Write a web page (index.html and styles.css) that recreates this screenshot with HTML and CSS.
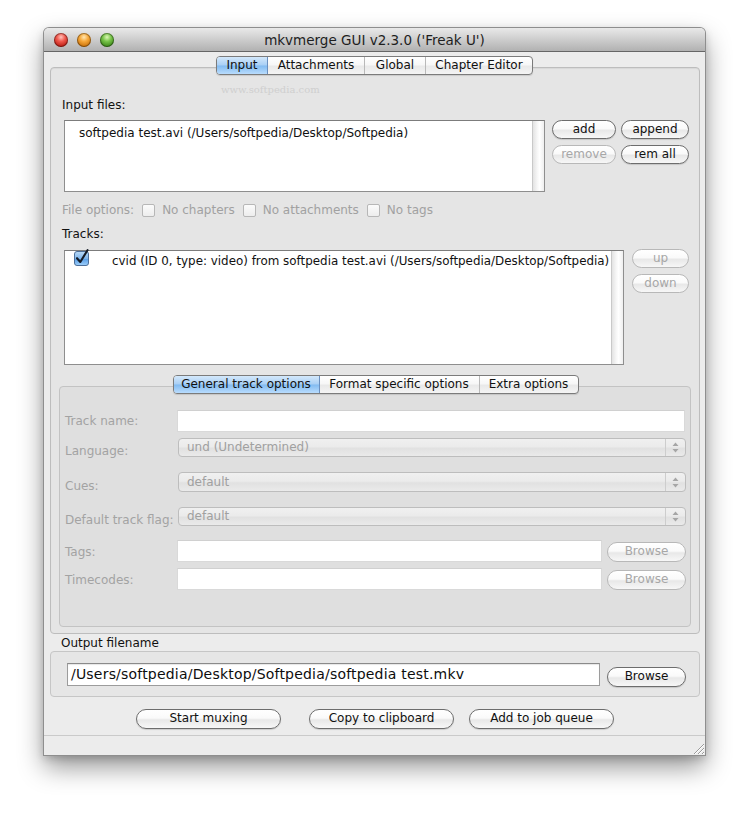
FILE: index.html
```html
<!DOCTYPE html>
<html>
<head>
<meta charset="utf-8">
<title>mkvmerge GUI</title>
<link rel="stylesheet" href="styles.css">
</head>
<body>
<div class="window">
  <div class="titlebar">
    <div class="lights">
      <span class="light red"></span>
      <span class="light yellow"></span>
      <span class="light green"></span>
    </div>
    <div class="title">mkvmerge GUI v2.3.0 ('Freak U')</div>
    <div></div>
  </div>

  <div class="tabs main-tabs">
    <span class="tab on tw-input">Input</span>
    <span class="tab tw-att">Attachments</span>
    <span class="tab tw-glob">Global</span>
    <span class="tab tw-chap">Chapter Editor</span>
  </div>

  <div class="panel main-panel">
    <div class="label lbl-input">Input files:</div>
    <div class="files-row">
      <div class="list files-list">
        <div class="list-item files-item">softpedia test.avi (/Users/softpedia/Desktop/Softpedia)</div>
        <div class="scrolltrack"></div>
      </div>
      <div class="btn-grid">
        <div class="btn bw-a">add</div>
        <div class="btn bw-b">append</div>
        <div class="btn bw-a disabled">remove</div>
        <div class="btn bw-b">rem all</div>
      </div>
    </div>

    <div class="fileopts">
      <span class="dim">File options:</span>
      <span class="cb"></span><span class="dim">No chapters</span>
      <span class="cb"></span><span class="dim">No attachments</span>
      <span class="cb"></span><span class="dim">No tags</span>
    </div>

    <div class="label lbl-tracks">Tracks:</div>
    <div class="tracks-row">
      <div class="list tracks-list">
        <div class="track-item">
          <svg class="checked" width="16" height="17" viewBox="0 0 16 17">
            <defs>
              <linearGradient id="cbg" x1="0" y1="0" x2="0" y2="1">
                <stop offset="0" stop-color="#bcdcf8"/>
                <stop offset="0.5" stop-color="#7fb6ec"/>
                <stop offset="0.55" stop-color="#5b9fe6"/>
                <stop offset="1" stop-color="#9fd0fb"/>
              </linearGradient>
            </defs>
            <rect x="0.5" y="2.5" width="14" height="14" rx="2.5" fill="url(#cbg)" stroke="#4d6f99"/>
            <path d="M3 9.2 L6.3 13 L13.5 1.2" fill="none" stroke="#161c26" stroke-width="2.1" stroke-linecap="round" stroke-linejoin="round"/>
          </svg>
          <span class="track-text">cvid (ID 0, type: video) from softpedia test.avi (/Users/softpedia/Desktop/Softpedia)</span>
        </div>
        <div class="scrolltrack"></div>
      </div>
      <div class="btn-col">
        <div class="btn bw-c disabled">up</div>
        <div class="btn bw-c disabled">down</div>
      </div>
    </div>

    <div class="tabs sub-tabs">
      <span class="tab on tw-gen">General track options</span>
      <span class="tab tw-fmt">Format specific options</span>
      <span class="tab tw-ext">Extra options</span>
    </div>
    <div class="panel sub-panel">
      <div class="frow r1">
        <div class="flabel l-center">Track name:</div>
        <div class="field f-name"></div>
      </div>
      <div class="frow r2">
        <div class="flabel l6">Language:</div>
        <div class="popup"><span class="ptext">und (Undetermined)</span><span class="parrows"><svg width="7" height="11" viewBox="0 0 7 11"><path d="M3.5 0.5 L6.5 4 L0.5 4 Z M3.5 10.5 L6.5 7 L0.5 7 Z" fill="#a6a6a6"/></svg></span></div>
      </div>
      <div class="frow r3">
        <div class="flabel l7">Cues:</div>
        <div class="popup"><span class="ptext">default</span><span class="parrows"><svg width="7" height="11" viewBox="0 0 7 11"><path d="M3.5 0.5 L6.5 4 L0.5 4 Z M3.5 10.5 L6.5 7 L0.5 7 Z" fill="#a6a6a6"/></svg></span></div>
      </div>
      <div class="frow r4">
        <div class="flabel l6">Default track flag:</div>
        <div class="popup"><span class="ptext">default</span><span class="parrows"><svg width="7" height="11" viewBox="0 0 7 11"><path d="M3.5 0.5 L6.5 4 L0.5 4 Z M3.5 10.5 L6.5 7 L0.5 7 Z" fill="#a6a6a6"/></svg></span></div>
      </div>
      <div class="frow r5">
        <div class="flabel l45">Tags:</div>
        <div class="field f-short"></div>
        <div class="btn bw-browse disabled b3">Browse</div>
      </div>
      <div class="frow r6">
        <div class="flabel l45">Timecodes:</div>
        <div class="field f-short"></div>
        <div class="btn bw-browse disabled b2">Browse</div>
      </div>
    </div>
  </div>

  <div class="label lbl-output">Output filename</div>
  <div class="outbox">
    <div class="outfield">/Users/softpedia/Desktop/Softpedia/softpedia test.mkv</div>
    <div class="btn bw-obrowse">Browse</div>
  </div>

  <div class="actions">
    <div class="btn bw-act">Start muxing</div>
    <div class="btn bw-act a2">Copy to clipboard</div>
    <div class="btn bw-act a3">Add to job queue</div>
  </div>

  <div class="statusbar">
    <svg class="grip" width="13" height="13" viewBox="0 0 13 13">
      <path d="M12 2 L2 12 M12 6 L6 12 M12 10 L10 12" stroke="#9a9a9a" stroke-width="1"/>
      <path d="M12 3 L3 12 M12 7 L7 12 M12 11 L11 12" stroke="#ffffff" stroke-width="1"/>
    </svg>
  </div>

  <div class="wm-small">www.softpedia.com</div>
</div>
</body>
</html>
```
FILE: styles.css
```css
* { box-sizing: border-box; }
html, body { margin: 0; padding: 0; }
body {
  width: 750px;
  height: 816px;
  overflow: hidden;
  background: #ffffff;
  font-family: "DejaVu Sans", "Liberation Sans", sans-serif;
  font-size: 12px;
  color: #111;
}

.window {
  position: relative;
  margin: 28px 0 0 44px;
  width: 661px;
  height: 727px;
  background: #ececec;
  border-radius: 5px 5px 0 0;
  box-shadow: 0 0 0 1px #8e8e8e, 0 12px 26px rgba(0,0,0,0.42), 0 3px 8px rgba(0,0,0,0.18);
  display: flex;
  flex-direction: column;
}

/* title bar */
.titlebar {
  height: 24px;
  flex: none;
  display: grid;
  grid-template-columns: 1fr auto 1fr;
  align-items: center;
  background: linear-gradient(#e9e9e9, #d0d0d0 45%, #b1b1b1 100%);
  border-bottom: 1px solid #666;
  border-radius: 5px 5px 0 0;
}
.lights { display: flex; gap: 9px; padding-left: 10px; }
.light {
  width: 14px; height: 14px; border-radius: 50%;
  box-shadow: inset 0 0 0 1px rgba(0,0,0,0.35);
}
.red { background: radial-gradient(circle at 50% 30%, #ffc3bc 0, #f05a4f 35%, #b8190f 80%, #d44034 100%); }
.yellow { background: radial-gradient(circle at 50% 30%, #ffe7b4 0, #f7a93b 35%, #c76e05 80%, #e39524 100%); }
.green { background: radial-gradient(circle at 50% 30%, #dcf7b4 0, #79c54b 35%, #3a8517 80%, #67b13b 100%); }
.title { font-size: 13.5px; color: #1e1e1e; text-align: center; padding-top: 1px; }

/* tabs */
.tabs {
  display: flex;
  align-self: center;
  height: 19px;
  flex: none;
  border: 1px solid #7b7b7b;
  border-radius: 4px;
  background: linear-gradient(#ffffff, #f7f7f7 45%, #e9e9e9 55%, #f4f4f4);
  position: relative;
  z-index: 1;
  box-shadow: 0 1px 1px rgba(0,0,0,0.12);
  overflow: hidden;
}
.tab {
  line-height: 17px;
  text-align: center;
  color: #111;
  border-left: 1px solid #b9b9b9;
}
.tab:first-child { border-left: none; }
.tab.on {
  background: linear-gradient(#d3e8fb, #a9cff5 48%, #82bbf1 52%, #b9dcfd);
  border-right: 1px solid #6a8fbf;
}
.tab.on + .tab { border-left: none; }
.main-tabs { margin-top: 4px; }
.tw-input { width: 51px; }
.tw-att { width: 96px; }
.tw-glob { width: 61px; }
.tw-chap { width: 107px; }

.panel {
  border: 1px solid #bdbdbd;
  border-radius: 4px;
}
.main-panel {
  flex: none;
  margin: -8px 5px 0 6px;
  background: #e5e5e5;
  padding: 30px 0 6px 0;
  display: flex;
  flex-direction: column;
  box-shadow: inset 0 1px 1px rgba(0,0,0,0.06);
}

.label { line-height: 15px; color: #111; flex: none; }
.lbl-input { margin-left: 11px; }
.files-row { display: flex; margin-top: 7px; margin-left: 13px; margin-right: 10px; align-items: flex-start; }
.list {
  position: relative;
  flex: none;
  background: #ffffff;
  border: 1px solid #8e8e8e;
  border-top-color: #7c7c7c;
}
.files-list { width: 481px; height: 72px; }
.files-item { padding: 4px 0 0 14px; line-height: 17px; }
.scrolltrack {
  position: absolute;
  top: 0; right: 0; bottom: 0;
  width: 12px;
  border-left: 1px solid #c9c9c9;
  background: linear-gradient(to right, #e3e3e3, #f7f7f7 40%, #ffffff 60%, #eeeeee);
}
.btn-grid {
  display: grid;
  grid-template-columns: 64px 68px;
  column-gap: 5px;
  row-gap: 6px;
  margin-left: auto;
}

.btn {
  height: 19px;
  border: 1px solid #6d6d6d;
  border-radius: 10px;
  background: linear-gradient(#ffffff, #fafafa 45%, #e8e8e8 55%, #f7f7f7);
  box-shadow: 0 1px 1px rgba(0,0,0,0.14);
  text-align: center;
  line-height: 17px;
  font-size: 12px;
  color: #111;
  white-space: nowrap;
  flex: none;
}
.btn.disabled { border-color: #b8b8b8; color: #a7a7a7; box-shadow: none; }

.fileopts {
  display: flex;
  align-items: center;
  height: 16px;
  margin-top: 10px;
  margin-left: 11px;
}
.dim { color: #a1a1a1; }
.cb {
  width: 13px; height: 13px;
  border: 1px solid #b7b7b7;
  border-radius: 2px;
  background: linear-gradient(#fbfbfb, #ededed);
  margin: 0 7px 0 8px;
}

.lbl-tracks { margin-top: 9px; margin-left: 11px; }
.tracks-row { display: flex; margin-top: 8px; margin-left: 13px; margin-right: 10px; align-items: flex-start; }
.tracks-list { width: 560px; height: 115px; }
.track-item { display: flex; align-items: flex-start; padding: 0 0 0 9px; }
.checked { flex: none; margin-top: -2px; }
.track-text { margin-left: 22px; line-height: 17px; padding-top: 2px; font-size: 11.9px; white-space: nowrap; }
.btn-col { display: flex; flex-direction: column; gap: 6px; margin-left: auto; margin-top: -1px; }
.bw-c { width: 57px; }

.sub-tabs { margin-top: 10px; margin-left: 1px; }
.tw-gen { width: 146px; }
.tw-fmt { width: 159px; }
.tw-ext { width: 99px; }
.sub-panel {
  flex: none;
  margin: -8px 8px 0 8px;
  background: #dfdfdf;
  border-color: #c3c3c3;
  padding: 23px 4px 36px 5px;
  display: flex;
  flex-direction: column;
}
.frow { display: flex; align-items: flex-start; flex: none; }
.flabel { width: 112px; flex: none; line-height: 15px; color: #a3a3a3; white-space: nowrap; }
.l-center { align-self: center; }
.l6 { margin-top: 6px; }
.l7 { margin-top: 7px; }
.l45 { margin-top: 4.5px; }
.r1 { height: 22px; }
.r2 { margin-top: 6px; height: 19px; }
.r3 { margin-top: 15px; height: 20px; }
.r4 { margin-top: 15px; height: 19px; }
.r5 { margin-top: 14px; height: 22px; }
.r6 { margin-top: 6px; height: 22px; }
.field {
  height: 22px;
  background: #ffffff;
  border: 1px solid #d9d9d9;
  border-top-color: #d0d0d0;
  flex: none;
}
.f-name { flex: 1; margin-right: 1px; }
.f-short { width: 425px; }
.popup {
  flex: 1;
  height: 100%;
  display: flex;
  align-items: center;
  border: 1px solid #bdbdbd;
  border-radius: 4px;
  background: linear-gradient(#f0f0f0, #ebebeb 45%, #e1e1e1 55%, #eaeaea);
  margin-left: 1px;
}
.ptext { flex: 1; padding-left: 8px; color: #a0a0a0; line-height: 15px; }
.parrows {
  width: 20px; height: 100%;
  border-left: 1px solid #cdcdcd;
  display: flex; align-items: center; justify-content: center;
}
.bw-browse { width: 79px; margin-left: 5px; height: 20px; }
.b3 { margin-top: 2px; }
.b2 { margin-top: 2px; }

.lbl-output { margin-top: 2px; margin-left: 17px; }
.outbox {
  flex: none;
  display: flex;
  align-items: flex-start;
  margin: 0 5px 0 6px;
  height: 46px;
  padding: 11px 13px 0 16px;
  border: 1px solid #c6c6c6;
  border-radius: 4px;
  background: #e6e6e6;
}
.outfield {
  width: 533px;
  height: 23px;
  flex: none;
  background: #ffffff;
  border: 1px solid #9c9c9c;
  border-top-color: #8a8a8a;
  box-shadow: inset 0 1px 1px rgba(0,0,0,0.1);
  font-size: 14px;
  letter-spacing: 0.2px;
  line-height: 20px;
  padding-left: 3px;
  color: #0d0d0d;
  white-space: nowrap;
  overflow: hidden;
}
.bw-obrowse { width: 79px; height: 20px; margin-left: 7px; margin-top: 4px; }

.actions { flex: none; display: flex; margin-top: 12px; padding-left: 92px; }
.bw-act { width: 145px; height: 20px; }
.a2 { margin-left: 28px; }
.a3 { margin-left: 15px; }

.statusbar {
  flex: none;
  margin-top: 6px;
  height: 20px;
  border-top: 1px solid #cacaca;
  display: flex;
  justify-content: flex-end;
  align-items: flex-end;
  background: #ececec;
}

.wm-small {
  position: absolute;
  left: 177px; top: 56px;
  font-family: "DejaVu Serif", serif;
  font-size: 10px;
  color: #cfcfcf;
  z-index: 2;
}
```
